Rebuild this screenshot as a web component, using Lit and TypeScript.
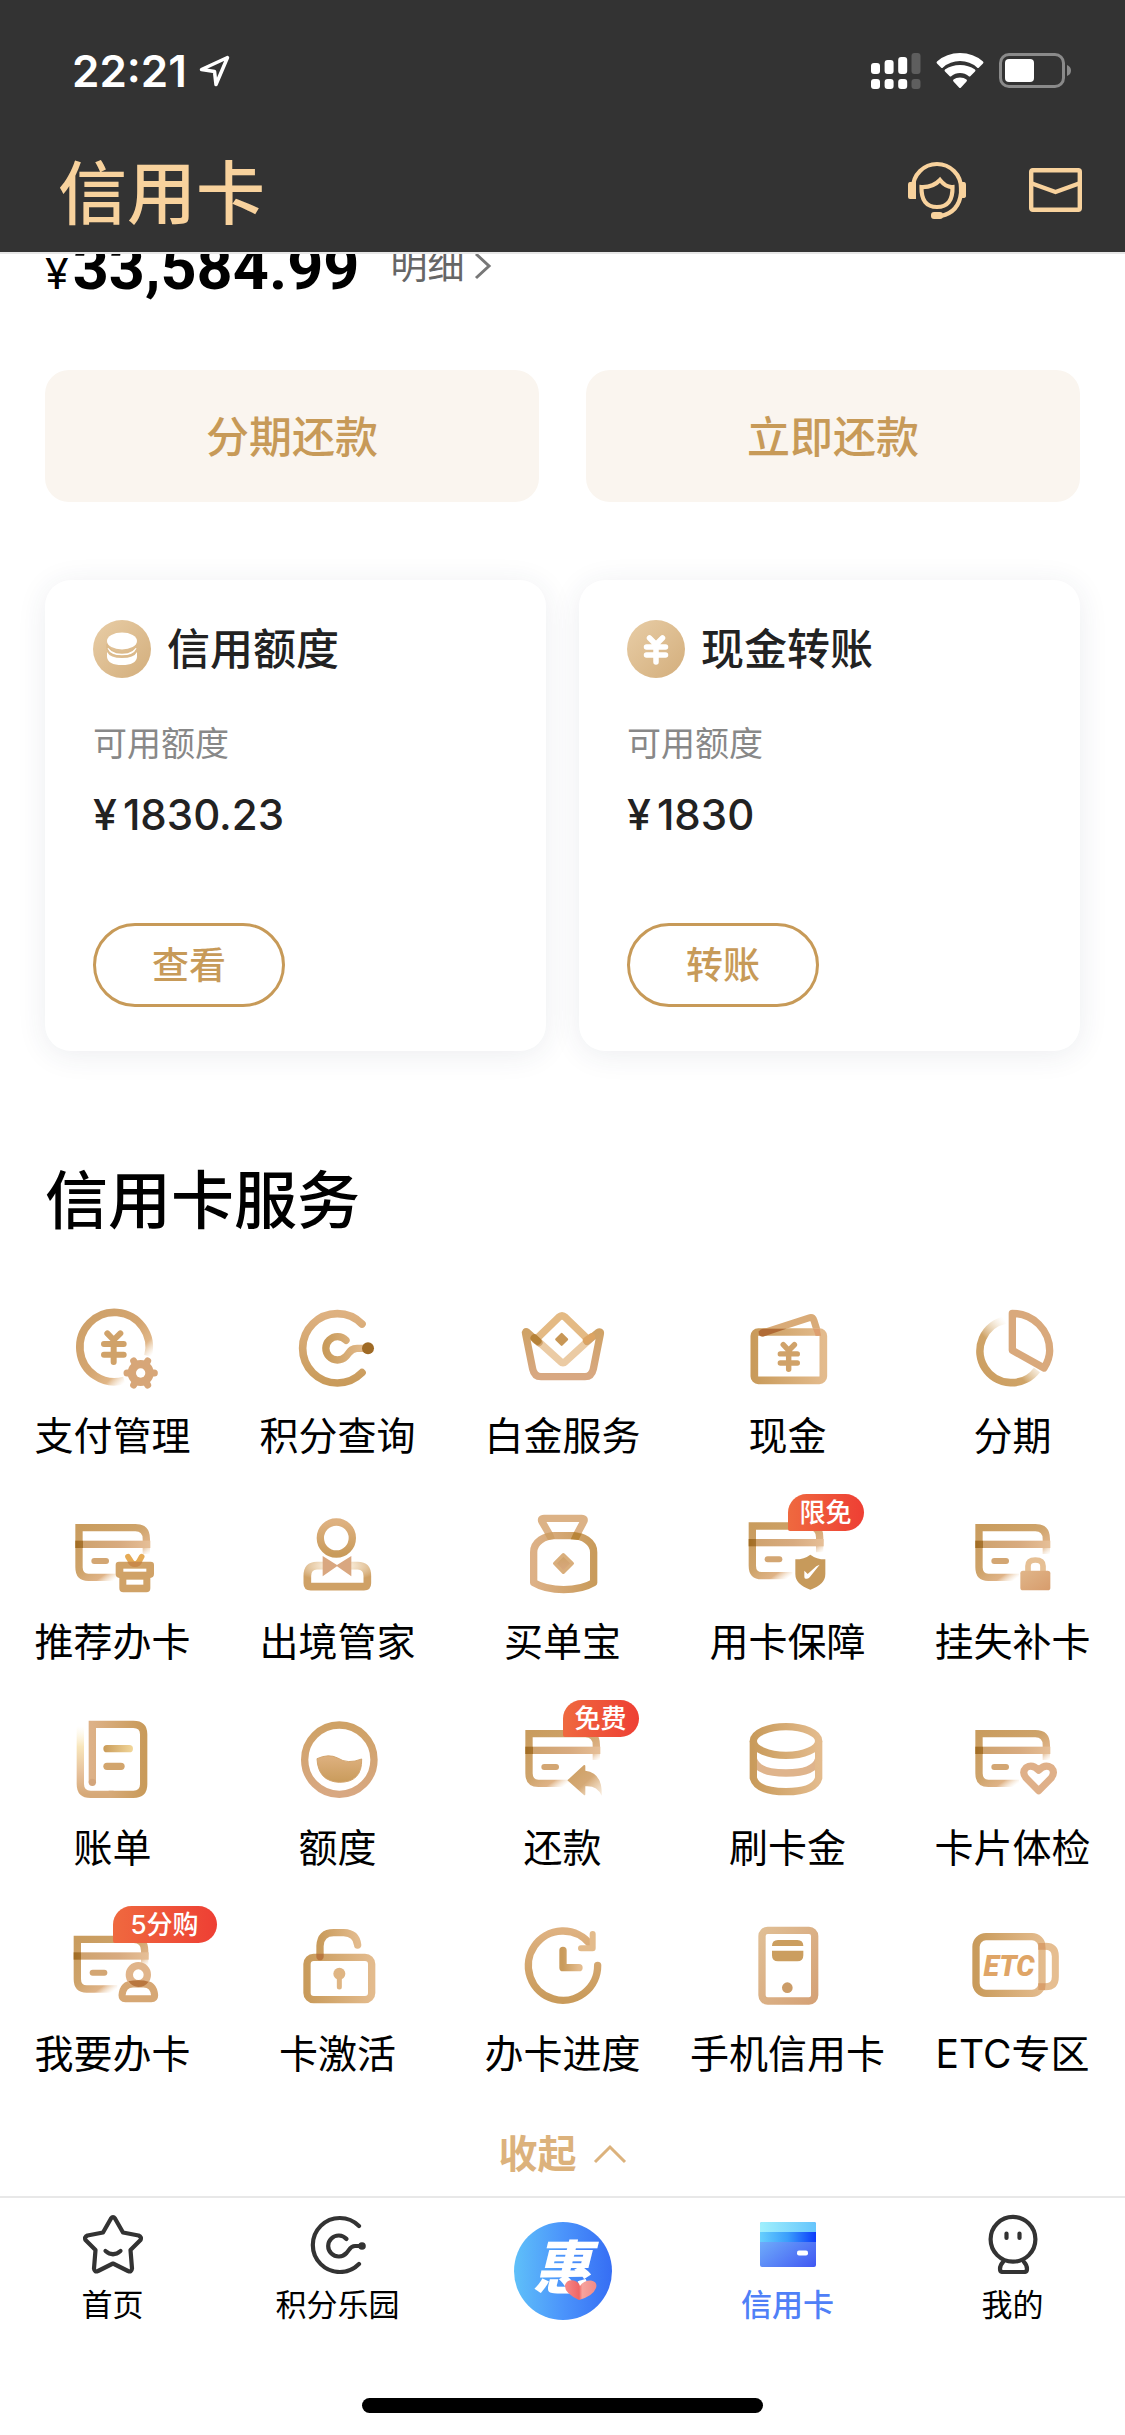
import { LitElement, html, svg, css, nothing, type SVGTemplateResult } from "lit";
import { customElement, property } from "lit/decorators.js";

interface Service {
  label: string;
  box: string;
  art: SVGTemplateResult;
  badge?: string;
  wide?: boolean;
}

/* Shared bank-card outline: fades out where an emblem sits on its lower right corner. */
const card = (x: number, y: number) => svg`
  <g transform="translate(${x} ${y})">
    <path d="M356 860H264Q236 860 236 830V711H405Q438 711 438 745V790" fill="none" stroke="url(#fade)" stroke-width="22"/>
    <rect x="225" y="750" width="225" height="22" fill="url(#band)"/>
    <rect x="273" y="802" width="53" height="18" rx="9" fill="#d3a673"/>
  </g>`;

const yen = (x: number, y: number, s: number, w: number) => svg`
  <path transform="translate(${x} ${y}) scale(${s})" d="M-19 -44L0 -24L20 -44M-29 -12H30M-29 20H30M0 -24V42"
    fill="none" stroke="#d0a269" stroke-width="${w}" stroke-linecap="round" stroke-linejoin="round"/>`;

const services: Service[] = [
  {
    label: "支付管理",
    box: "188 22 300 300",
    art: svg`
      <path d="M443 196A104 104 0 1 0 372 269" fill="none" stroke="url(#fadeRing)" stroke-width="23"/>
      ${yen(340, 172, 1, 18)}
      <circle cx="421" cy="247" r="39" fill="#d7a678"/>
      <path d="M380 247H462M400 211L442 283M442 211L400 283" stroke="#d7a678" stroke-width="21" stroke-linecap="round"/>
      <circle cx="421" cy="247" r="14" fill="#fff"/>`,
  },
  {
    label: "积分查询",
    box: "863 22 300 300",
    art: svg`
      <path d="M1085 100A104 104 0 1 0 1085 246" fill="none" stroke="url(#down)" stroke-width="23" stroke-linecap="round"/>
      <path d="M1037 149A35 35 0 1 0 1036 198C1048 186 1050 173 1070 173H1092" fill="none" stroke="url(#across)" stroke-width="22" stroke-linecap="round"/>
      <circle cx="1103" cy="173" r="18" fill="#9f6a25"/>`,
  },
  {
    label: "白金服务",
    box: "248 22 300 300",
    art: svg`
      <path d="M315 148L385 80Q395 71 405 80L475 148" fill="none" stroke="#e4ba84" stroke-width="22" stroke-linecap="round"/>
      <path d="M310 140L390 212Q398 220 406 212L485 140" fill="none" stroke="#ebcba4" stroke-width="22"/>
      <path d="M326 156L291 125Q284 120 286 130L307 235Q312 258 332 258H464Q484 258 489 235L510 130Q512 120 502 126L470 152"
        fill="none" stroke="url(#downRose)" stroke-width="22" stroke-linecap="round"/>
      <path d="M312 142L322 151" stroke="#b68238" stroke-width="23" stroke-linecap="round"/>
      <path d="M468 149L484 138" stroke="#dca463" stroke-width="21" stroke-linecap="round"/>
      <path d="M394 130L410 146L394 162L378 146Z" fill="#c89756" stroke="#c89756" stroke-width="7" stroke-linejoin="round"/>`,
  },
  {
    label: "现金",
    box: "143 22 300 300",
    art: svg`
      <path d="M216 127L355 82Q367 78 371 90L382 125" fill="none" stroke="#d9ab78" stroke-width="21" stroke-linecap="round"/>
      <rect x="192" y="124" width="207" height="145" rx="12" fill="none" stroke="url(#across)" stroke-width="23"/>
      <path d="M206 122Q210 115 218 114H288L222 137Q206 140 205 126Z" fill="#b16b36"/>
      <path d="M368 114H388L392 135H376Z" fill="#dd9f70"/>
      ${yen(295, 200, 0.86, 19)}`,
  },
  {
    label: "分期",
    box: "818 22 300 300",
    art: svg`
      <path d="M945 88A95 95 0 1 0 1040 238" fill="none" stroke="url(#fadeUp)" stroke-width="23"/>
      <path d="M966 68V179L1061 232Q1078 205 1078 180A112 112 0 0 0 966 68Z" fill="#fff" stroke="#d9a97c" stroke-width="22" stroke-linejoin="round"/>`,
  },
  {
    label: "推荐办卡",
    box: "188 640 300 300",
    art: svg`
      ${card(0, 0)}
      <path d="M383 798L392 812Q404 828 416 812L424 798" fill="none" stroke="#e5aa55" stroke-width="17" stroke-linecap="round"/>
      <path d="M356 813H451Q461 813 461 823V849Q461 860 450 862V893Q450 905 438 905H369Q357 905 357 893V862Q346 860 346 849V823Q346 813 356 813Z" fill="#d0a267"/>
      <path d="M381 813H426Q420 829 404 829Q388 829 381 813Z" fill="#c98a4b"/>
      <rect x="369" y="834" width="69" height="9" fill="#fff"/>
      <rect x="378" y="867" width="51" height="15" fill="#fff"/>`,
  },
  {
    label: "出境管家",
    box: "863 640 300 300",
    art: svg`
      <circle cx="1008" cy="742" r="48" fill="none" stroke="url(#down)" stroke-width="22"/>
      <path d="M972 825H950Q921 825 921 856V878Q921 888 931 888H1091Q1101 888 1101 878V856Q1101 825 1072 825H1048"
        fill="none" stroke="url(#glow)" stroke-width="23"/>
      <path d="M967 796L1010 823L1053 796V857L1010 827L967 857Z" fill="#d9a780"/>`,
  },
  {
    label: "买单宝",
    box: "248 640 300 300",
    art: svg`
      <path d="M360 736L335 693Q330 683 341 683H454Q465 683 460 693L437 736" fill="none" stroke="#dcb286" stroke-width="22"/>
      <path d="M310 785C310 752 345 735 372 735H428C455 735 490 752 490 785V876Q455 897 400 897Q345 897 310 876Z"
        fill="none" stroke="url(#acrossRev)" stroke-width="22" stroke-linejoin="round"/>
      <path d="M431 724L454 729L445 748L421 746Z" fill="#b98539"/>
      <path d="M343 729L366 724L374 744L353 748Z" fill="#cfa067"/>
      <path d="M399 792L426 818L399 845L373 818Z" fill="url(#downRose)" stroke="#d9ae7c" stroke-width="10" stroke-linejoin="round"/>`,
  },
  {
    label: "用卡保障",
    box: "143 640 300 300",
    badge: "限免",
    art: svg`
      ${card(-50, -5)}
      <path d="M360 792Q378 806 405 806V850Q405 882 360 897Q315 882 315 850V806Q342 806 360 792Z" fill="#c79a5b"/>
      <path d="M342 840L352 850L368 836Q378 824 388 822L358 860Q355 864 350 864H346Q342 864 342 858Z" fill="#fff"/>`,
  },
  {
    label: "挂失补卡",
    box: "818 640 300 300",
    art: svg`
      ${card(630, 0)}
      <path d="M1013 842V826Q1013 808 1035 808Q1058 808 1058 826V842" fill="#fff" stroke="#e6c095" stroke-width="17"/>
      <rect x="990" y="840" width="90" height="59" rx="8" fill="url(#tan)"/>`,
  },
  {
    label: "账单",
    box: "188 58 300 300",
    art: svg`
      <path d="M240 106V280Q240 311 271 311H340" fill="none" stroke="url(#rise)" stroke-width="22"/>
      <path d="M276 275V101H399Q430 101 430 131V281Q430 311 399 311H325" fill="none" stroke="url(#acrossRev)" stroke-width="22"/>
      <circle cx="276" cy="275" r="11" fill="#d3a57c"/>
      <rect x="309" y="163" width="89" height="22" rx="11" fill="url(#gleam)"/>
      <rect x="309" y="216" width="64" height="22" rx="11" fill="#d2a56d"/>`,
  },
  {
    label: "额度",
    box: "863 58 300 300",
    art: svg`
      <circle cx="1017" cy="207" r="104" fill="none" stroke="url(#downRose)" stroke-width="22"/>
      <path d="M950 204Q985 188 1012 202Q1042 222 1084 205Q1086 275 1017 275Q953 272 950 204Z"
        fill="url(#down)" stroke="#d3a56e" stroke-width="3" stroke-linejoin="round"/>`,
  },
  {
    label: "还款",
    box: "248 58 300 300",
    badge: "免费",
    art: svg`
      ${card(60, -582)}
      <path d="M411 269L460 224Q465 221 465 227V240Q517 246 514 315Q500 284 465 287V310Q465 316 460 312Z" fill="url(#arrow)"/>`,
  },
  {
    label: "刷卡金",
    box: "143 58 300 300",
    art: svg`
      <path d="M189 205Q200 247 287 247Q374 247 385 205" fill="none" stroke="#dfb48c" stroke-width="22"/>
      <path d="M189 151V262Q200 303 287 303Q374 303 385 262V151" fill="none" stroke="url(#across)" stroke-width="22"/>
      <ellipse cx="287" cy="151" rx="98" ry="43" fill="#fff" stroke="url(#across)" stroke-width="22"/>`,
  },
  {
    label: "卡片体检",
    box: "818 58 300 300",
    art: svg`
      ${card(630, -582)}
      <path d="M1045 300L1008 263Q993 245 1007 231Q1026 219 1045 239Q1064 219 1083 231Q1096 245 1082 263Z"
        fill="#fff" stroke="#fff" stroke-width="32" stroke-linejoin="round"/>
      <path d="M1045 300L1008 263Q993 245 1007 231Q1026 219 1045 239Q1064 219 1083 231Q1096 245 1082 263Z"
        fill="#fff" stroke="#dfb089" stroke-width="21" stroke-linejoin="round"/>`,
  },
  {
    label: "我要办卡",
    box: "188 676 300 300",
    badge: "5分购",
    wide: true,
    art: svg`
      ${card(-5, 35)}
      <path d="M375 924H453Q463 924 463 914Q460 880 430 880H398Q368 880 365 914Q365 924 375 924Z"
        fill="#fff" stroke="#d6a774" stroke-width="21"/>
      <circle cx="414" cy="852" r="27" fill="#fff" stroke="#e0b48a" stroke-width="22"/>
      <path d="M384 872Q398 869 414 869Q432 869 445 873Q434 889 414 889Q396 889 384 872Z" fill="#b9773f"/>`,
  },
  {
    label: "卡激活",
    box: "863 676 300 300",
    art: svg`
      <path d="M959 797V766Q961 726 1000 726H1030Q1068 727 1072 763" fill="none" stroke="url(#across)" stroke-width="22" stroke-linecap="round"/>
      <rect x="920" y="800" width="194" height="127" rx="20" fill="none" stroke="url(#across)" stroke-width="22"/>
      <path d="M948 789H970V799Q968 809 959 809Q950 809 948 799Z" fill="#b9773f"/>
      <circle cx="1017" cy="849" r="18" fill="#dfb583"/>
      <path d="M1017 850V889" stroke="#dfb583" stroke-width="15" stroke-linecap="round"/>`,
  },
  {
    label: "办卡进度",
    box: "248 676 300 300",
    art: svg`
      <path d="M502 824A104 104 0 1 1 480 761" fill="none" stroke="url(#down)" stroke-width="22" stroke-linecap="round"/>
      <path d="M487 730V773H452" fill="none" stroke="#e3bb8b" stroke-width="18" stroke-linecap="round" stroke-linejoin="round"/>
      <path d="M398 779V831H446" fill="none" stroke="url(#across)" stroke-width="22" stroke-linecap="round" stroke-linejoin="round"/>`,
  },
  {
    label: "手机信用卡",
    box: "143 676 300 300",
    art: svg`
      <rect x="215" y="719" width="158" height="212" rx="17" fill="none" stroke="url(#rose)" stroke-width="22"/>
      <path d="M245 766Q245 748 263 748H321Q339 748 339 766ZM245 780H339V794Q339 812 321 812H263Q245 812 245 794Z" fill="#cb9e5f"/>
      <circle cx="291" cy="891" r="16" fill="#cb9c68"/>`,
  },
  {
    label: "ETC专区",
    box: "818 676 300 300",
    art: svg`
      <path d="M1045 767H1066Q1095 767 1095 797V858Q1095 888 1066 888H1045" fill="none" stroke="#e6be91" stroke-width="21"/>
      <rect x="857" y="738" width="198" height="170" rx="30" fill="none" stroke="url(#across)" stroke-width="22"/>
      <path d="M1044 757H1064L1066 777H1044ZM1044 878H1066L1064 898H1044Z" fill="#d99f6b"/>
      <text class="etc" x="956" y="857" text-anchor="middle">ETC</text>`,
  },
];

@customElement("service-tile")
class ServiceTile extends LitElement {
  @property({ attribute: false }) item!: Service;

  static styles = css`
    :host { display: block; }
    .tile { position: relative; display: flex; flex-direction: column; align-items: center; gap: 18px; color: #000; text-decoration: none; }
    .icon { width: 100px; height: 100px; overflow: visible; }
    .label { font-size: 39px; line-height: 40px; white-space: nowrap; }
    .badge {
      position: absolute; left: 50%; top: -10px; padding: 0 12px; border-radius: 19px 19px 19px 2px;
      background: linear-gradient(90deg, #ef693f, #ee3f34); color: #fff; font-size: 26px; line-height: 37px; font-weight: 500; white-space: nowrap;
    }
    .wide { padding: 0 18px; }
    .etc { font: italic 900 86px Roboto, "Liberation Sans", sans-serif; fill: #dfa567; }
  `;

  render() {
    const s = this.item;
    return html`<a class="tile" href="#service">
      <svg class="icon" viewBox=${s.box} aria-hidden="true">
        <defs>
          <linearGradient id="fade" x1="0" y1="0" x2="1" y2="1"><stop offset="0" stop-color="#c99c5e"/><stop offset=".45" stop-color="#cea36a"/><stop offset=".66" stop-color="#dfb387"/><stop offset=".79" stop-color="#f0d6b8" stop-opacity="0"/></linearGradient>
          <linearGradient id="fadeRing" x1="0" y1="0" x2="1" y2="1"><stop offset="0" stop-color="#cda068"/><stop offset=".5" stop-color="#d4a570"/><stop offset=".7" stop-color="#e0b687"/><stop offset=".83" stop-color="#f0d6b8" stop-opacity="0"/></linearGradient>
          <linearGradient id="fadeUp" x1="0" y1="1" x2="1" y2="0"><stop offset="0" stop-color="#cb9d60"/><stop offset=".4" stop-color="#cfa468"/><stop offset=".72" stop-color="#efd9b8" stop-opacity="0"/></linearGradient>
          <linearGradient id="band" x1="0" y1="0" x2="1" y2="0"><stop offset="0" stop-color="#a16c22"/><stop offset=".1" stop-color="#a8742f"/><stop offset=".1" stop-color="#cfa36f"/><stop offset=".6" stop-color="#d8ab80"/><stop offset="1" stop-color="#e6bf97"/></linearGradient>
          <linearGradient id="down" x1="0" y1="0" x2="0" y2="1"><stop offset="0" stop-color="#deb180"/><stop offset="1" stop-color="#c99b5b"/></linearGradient>
          <linearGradient id="downRose" x1="0" y1="0" x2="0" y2="1"><stop offset="0" stop-color="#cfa266"/><stop offset="1" stop-color="#d8a882"/></linearGradient>
          <linearGradient id="across" x1="0" y1="0" x2="1" y2="0"><stop offset="0" stop-color="#c99b5b"/><stop offset="1" stop-color="#e3bb8d"/></linearGradient>
          <linearGradient id="acrossRev" x1="0" y1="0" x2="1" y2="0"><stop offset="0" stop-color="#ddb187"/><stop offset="1" stop-color="#c99b5b"/></linearGradient>
          <linearGradient id="rose" x1="0" y1="0" x2="1" y2="1"><stop offset="0" stop-color="#e0be94"/><stop offset="1" stop-color="#d5a277"/></linearGradient>
          <linearGradient id="rise" x1="0" y1="0" x2="0" y2="1"><stop offset="0" stop-color="#fdf3d6" stop-opacity="0"/><stop offset=".3" stop-color="#f8e6bb"/><stop offset=".7" stop-color="#e6c09a"/><stop offset="1" stop-color="#d6a978"/></linearGradient>
          <linearGradient id="gleam" x1="0" y1="0" x2="1" y2="0"><stop offset="0" stop-color="#c99b58"/><stop offset="1" stop-color="#f2d79b"/></linearGradient>
          <linearGradient id="tan" x1="0" y1="0" x2="1" y2="1"><stop offset="0" stop-color="#e0b68a"/><stop offset="1" stop-color="#d79c6c"/></linearGradient>
          <linearGradient id="arrow" x1="0" y1="0" x2="1" y2="1"><stop offset="0" stop-color="#cb9d5e"/><stop offset=".55" stop-color="#d5a976"/><stop offset="1" stop-color="#eed1ad" stop-opacity=".4"/></linearGradient>
          <radialGradient id="glow" cx=".5" cy="0" r=".75"><stop offset=".3" stop-color="#f8ead6"/><stop offset="1" stop-color="#cfa166"/></radialGradient>
        </defs>
        ${s.art}
      </svg>
      <span class="label">${s.label}</span>
      ${s.badge ? html`<span class="badge ${s.wide ? "wide" : ""}">${s.badge}</span>` : nothing}
    </a>`;
  }
}

@customElement("app-root")
class AppRoot extends LitElement {
  static styles = css`
    :host {
      display: flex; flex-direction: column; min-height: 100vh; background: #fff; color: #000;
      font-family: Inter, "Noto Sans CJK SC", sans-serif;
    }
    * { box-sizing: border-box; }
    h1, h2, h3, p, ul { margin: 0; padding: 0; }
    h1, h2, h3 { font-weight: 500; }
    ul { list-style: none; }
    button { font: inherit; cursor: pointer; }
    a { text-decoration: none; }
    svg { display: block; flex: none; }

    .header { position: relative; z-index: 1; background: #333; border-bottom: 2px solid #e6e6e6; padding-bottom: 14px; }
    .status { display: flex; align-items: center; justify-content: space-between; height: 142px; padding: 0 53px 0 72px; color: #fff; }
    .clock { display: flex; align-items: center; gap: 12px; font-size: 44px; line-height: 48px; font-weight: 600; }
    .signals { display: flex; align-items: center; gap: 15px; }
    .titlebar { display: flex; align-items: center; justify-content: space-between; height: 96px; padding: 0 43px 0 58px; color: #f8d29d; }
    .title { padding-top: 8px; font-size: 69px; line-height: 80px; }
    .tools { display: flex; align-items: center; gap: 62px; }
    .tool { padding: 0; border: 0; background: none; color: inherit; }

    .bill { display: flex; align-items: baseline; margin-top: -26px; padding: 0 45px; height: 76px; line-height: 80px; }
    .yen { font-size: 43px; }
    .total { margin-left: 4px; font-family: Roboto, "Liberation Sans", sans-serif; font-size: 63px; font-weight: 700; }
    .detail { display: flex; align-items: center; align-self: flex-start; gap: 10px; margin-left: 31px; color: #666; font-size: 37px; line-height: 76px; }
    .pay { display: grid; grid-template-columns: 1fr 1fr; gap: 47px; margin-top: 66px; padding: 0 45px; }
    .paybtn { height: 132px; padding: 0 0 4px; border: 0; border-radius: 24px; background: #faf5ef; color: #c79a58; font-size: 43px; font-weight: 500; }

    .cards { display: grid; grid-template-columns: 1fr 1fr; gap: 33px; margin-top: 78px; padding: 0 45px; }
    .card { display: flex; flex-direction: column; align-items: flex-start; padding: 40px 48px 44px; border-radius: 26px; background: #fff; box-shadow: 0 4px 30px rgba(40, 50, 90, 0.09); }
    .cardhead { display: flex; align-items: center; gap: 16px; color: #222; line-height: 58px; }
    .cardhead h3 { font-size: 43px; }
    .hint { margin-top: 46px; color: #888; font-size: 34px; line-height: 40px; }
    .sum { display: flex; align-items: baseline; gap: 6px; margin-top: 24px; color: #222; font-size: 42px; line-height: 52px; font-weight: 500; }
    .pill { width: 192px; height: 84px; margin-top: 82px; padding: 0 0 4px; border: 3px solid #c79a58; border-radius: 42px; background: #fff; color: #c79a58; font-size: 37px; font-weight: 500; }

    .heading { margin-top: 117px; padding: 0 45px; font-size: 63px; line-height: 64px; }
    .grid { display: grid; grid-template-columns: repeat(5, 1fr); row-gap: 48px; margin-top: 66px; }
    .fold { display: flex; align-items: center; align-self: center; gap: 16px; margin: 60px 0 22px; padding: 0; border: 0; background: none; color: #dcb27c; font-size: 39px; line-height: 40px; font-weight: 600; }

    .main { display: flex; flex-direction: column; }
    .nav { display: grid; grid-template-columns: repeat(5, 1fr); border-top: 2px solid #e8e8e8; padding-top: 16px; }
    .tab { display: flex; flex-direction: column; align-items: center; gap: 15px; color: #000; font-size: 31px; line-height: 32px; }
    .active { color: #4f80f7; font-weight: 500; }
    .brand { padding-top: 8px; }
    .logo { overflow: visible; }
    .mark { font: italic 900 58px "Noto Sans CJK SC", sans-serif; fill: #fff; }
    .homebar { width: 36%; max-width: 401px; height: 15px; margin: 77px auto 23px; border-radius: 8px; background: #000; }
  `;

  private summary(icon: SVGTemplateResult, name: string, value: string, action: string) {
    return html`<article class="card">
      <div class="cardhead">
        <svg width="58" height="58" viewBox="0 0 58 58" aria-hidden="true">
          <defs><linearGradient id="coin" x1="0" y1="0" x2="1" y2="1"><stop offset="0" stop-color="#e8cda6"/><stop offset="1" stop-color="#d3ae7c"/></linearGradient></defs>
          <circle cx="29" cy="29" r="29" fill="url(#coin)"/>${icon}
        </svg>
        <h3>${name}</h3>
      </div>
      <p class="hint">可用额度</p>
      <p class="sum"><span class="yen">¥</span><span>${value}</span></p>
      <button class="pill">${action}</button>
    </article>`;
  }

  render() {
    return html`
      <header class="header">
        <div class="status">
          <div class="clock"><span>22:21</span>
            <svg width="31" height="32" viewBox="0 0 31 32" aria-hidden="true"><path d="M28.500 2.500L2.500 14.500L15.500 16.500L17 29.500Z" fill="none" stroke="#fff" stroke-width="3.500" stroke-linejoin="round"/></svg>
          </div>
          <div class="signals">
            <svg width="50" height="36" viewBox="0 0 50 36" aria-hidden="true" fill="#fff">
              <rect x="0" y="10" width="9" height="11" rx="3"/><rect x="13.600" y="7" width="9" height="14" rx="3"/><rect x="27.200" y="4" width="9" height="17" rx="3"/>
              <rect x="0" y="26" width="9" height="10" rx="3"/><rect x="13.600" y="26" width="9" height="10" rx="3"/><rect x="27.200" y="26" width="9" height="10" rx="3"/>
              <g fill="#5e5e5e"><rect x="40.500" y="0" width="9" height="21" rx="3"/><rect x="40.500" y="26" width="9" height="10" rx="3"/></g>
            </svg>
            <svg width="48" height="36" viewBox="0 0 48 36" aria-hidden="true" fill="#fff">
              <path d="M1 10.500Q0 9.500 1 8.500Q10.500 0 24 0T47 8.500Q48 9.500 47 10.500L43 14.500Q42 15.500 41 14.500Q34 8 24 8T7 14.500Q6 15.500 5 14.500Z"/>
              <path d="M9 18.500Q8 17.500 9 16.500Q15.500 12 24 12T39 16.500Q40 17.500 39 18.500L34.500 23Q33.500 24 32.500 23Q29 20 24 20T15.500 23Q14.500 24 13.500 23Z"/>
              <path d="M17.500 28.500Q16.500 27.500 17.500 26.500Q20 24.500 24 24.500T30.500 26.500Q31.500 27.500 30.500 28.500L25 34.500Q24 35.500 23 34.500Z"/>
            </svg>
            <svg width="73" height="36" viewBox="0 0 73 36" aria-hidden="true">
              <rect x="1.500" y="1.500" width="63" height="32" rx="8.500" fill="none" stroke="#8a8a8a" stroke-width="3"/>
              <rect x="6" y="6" width="29" height="23" rx="4" fill="#fff"/>
              <path d="M68 12Q72 13.500 72 17.500T68 23Z" fill="#8a8a8a"/>
            </svg>
          </div>
        </div>
        <div class="titlebar">
          <h1 class="title">信用卡</h1>
          <div class="tools">
            <button class="tool" aria-label="客服">
              <svg width="60" height="60" viewBox="0 0 60 60" fill="none" stroke="currentColor" stroke-width="4.200">
                <path d="M6 30V28A24 24 0 0 1 54 28V33Q52 52 34 56"/>
                <path d="M14.500 27Q26 27.500 33 20Q39 27.500 45.500 27Q46 47 30 47Q14 47 14.500 27Z"/>
                <path d="M3 22H9V39H3Q1 39 1 37V25Q1 22 3 22ZM52 22H57Q59 22 59 25V36Q59 38 56 38H52Z" fill="currentColor" stroke="none"/>
                <rect x="24" y="52" width="12" height="7" rx="3" fill="currentColor" stroke="none"/>
              </svg>
            </button>
            <button class="tool" aria-label="消息">
              <svg width="53" height="44" viewBox="0 0 53 44" fill="none" stroke="currentColor" stroke-width="4.400">
                <rect x="2.200" y="2.200" width="48.600" height="39.600" rx="1.500"/><path d="M3 15.500L26.500 24L50 15.500"/>
              </svg>
            </button>
          </div>
        </div>
      </header>

      <main class="main">
        <section class="bill">
          <span class="yen">¥</span><span class="total">33,584.99</span>
          <a class="detail" href="#detail">明细
            <svg width="18" height="28" viewBox="0 0 18 28" aria-hidden="true"><path d="M2 2L15 14L2 26" fill="none" stroke="#777" stroke-width="3"/></svg>
          </a>
        </section>
        <div class="pay">
          <button class="paybtn">分期还款</button>
          <button class="paybtn">立即还款</button>
        </div>
        <section class="cards">
          ${this.summary(
            svg`<path d="M14 32Q17 38 29 38T44 32V37Q43 45 29 45T14 37Z" fill="#fff"/>
              <path d="M14 24Q17 33 29 33T44 24V29Q41 36 29 36T14 29Z" fill="#fff" stroke="#dcba8b" stroke-width="1.500"/>
              <ellipse cx="29" cy="21" rx="15" ry="8.500" fill="#fff"/>`,
            "信用额度", "1830.23", "查看")}
          ${this.summary(
            svg`<path d="M22.500 18L29 24.500L35.500 18M19.500 27H38.500M19.500 35H38.500M29 25V42" fill="none" stroke="#fff" stroke-width="5.500" stroke-linecap="round"/>`,
            "现金转账", "1830", "转账")}
        </section>

        <h2 class="heading">信用卡服务</h2>
        <ul class="grid">
          ${services.map((s) => html`<li><service-tile .item=${s}></service-tile></li>`)}
        </ul>
        <button class="fold">收起
          <svg width="34" height="20" viewBox="0 0 34 20" aria-hidden="true"><path d="M2 18L17 3L32 18" fill="none" stroke="currentColor" stroke-width="3"/></svg>
        </button>
      </main>

      <nav class="nav">
        <a class="tab" href="#home">
          <svg width="60" height="60" viewBox="0 0 60 60" fill="none" stroke="#333" stroke-width="4.200" stroke-linejoin="round" stroke-linecap="round" aria-hidden="true">
            <path d="M28 4.500Q30 1.500 32 4.500L40 18.500L55.500 21.500Q59 23 57.500 26L47.500 36L49 54.500Q48.500 58.500 45 57L30 49.500L15 57Q11.500 58.500 11 54.500L12.500 36L2.500 26Q1 23 4.500 21.500L20 18.500Z"/>
            <path d="M22.500 37Q30 43.500 37.500 37"/>
          </svg>首页</a>
        <a class="tab" href="#points">
          <svg width="60" height="60" viewBox="0 0 60 60" fill="none" stroke="#333" stroke-width="4.200" stroke-linecap="round" aria-hidden="true">
            <path d="M51 12A27 27 0 1 0 51 50"/>
            <path d="M38.500 25A10.500 10.500 0 1 0 38.500 39C41.500 36 42 32 47 32H52"/>
            <circle cx="54" cy="32" r="3.800" fill="#333" stroke="none"/>
          </svg>积分乐园</a>
        <a class="tab brand" href="#offers" aria-label="惠">
          <svg class="logo" width="98" height="98" viewBox="0 0 98 98" aria-hidden="true">
            <defs>
              <linearGradient id="disc" x1="0" y1="0" x2="1" y2="0"><stop offset="0" stop-color="#5fc0f9"/><stop offset=".5" stop-color="#4b94fb"/><stop offset="1" stop-color="#366ef4"/></linearGradient>
              <linearGradient id="heart" x1="0" y1="0" x2="1" y2="0"><stop offset="0" stop-color="#f58a8a"/><stop offset=".45" stop-color="#ef6566"/><stop offset=".55" stop-color="#f6a39d"/><stop offset="1" stop-color="#f08a88"/></linearGradient>
            </defs>
            <circle cx="49" cy="49" r="49" fill="url(#disc)"/>
            <text class="mark" x="48" y="67" text-anchor="middle">惠</text>
            <path d="M65 78Q50 71 51 63Q53 57 60 58.500Q65 60 66 64Q70 58 77 58.500Q84 60 82 66Q79 74 65 78Z" fill="url(#heart)"/>
          </svg></a>
        <a class="tab active" href="#card" aria-current="page">
          <svg width="60" height="60" viewBox="0 0 60 60" aria-hidden="true">
            <defs>
              <linearGradient id="n1" x1="0" y1="0" x2="1" y2="0"><stop offset="0" stop-color="#a0f0fd"/><stop offset="1" stop-color="#66c5fc"/></linearGradient>
              <linearGradient id="n2" x1="0" y1="0" x2="1" y2="0"><stop offset="0" stop-color="#66cffd"/><stop offset=".5" stop-color="#3a9dfb"/><stop offset="1" stop-color="#0b3bfb"/></linearGradient>
              <linearGradient id="n3" x1="0" y1="0" x2="1" y2="1"><stop offset="0" stop-color="#7cc4fc"/><stop offset="1" stop-color="#4057f3"/></linearGradient>
            </defs>
            <rect x="2" y="8" width="56" height="45" rx="2" fill="url(#n3)"/>
            <path d="M2 18V10Q2 8 4 8H56Q58 8 58 10V18Z" fill="url(#n1)"/>
            <rect x="2" y="18" width="56" height="10" fill="url(#n2)"/>
            <rect x="39" y="36.500" width="11" height="5" rx="2" fill="#fff"/>
          </svg>信用卡</a>
        <a class="tab" href="#me">
          <svg width="60" height="60" viewBox="0 0 60 60" fill="none" stroke="#333" stroke-width="4.200" stroke-linecap="round" stroke-linejoin="round" aria-hidden="true">
            <circle cx="30" cy="25.300" r="22.400"/><path d="M23.500 19.500V24M36.500 19.500V24"/>
            <path d="M20 48Q17 51 17 55Q17 58 20 58H41Q44 58 44 55Q44 51 41 48"/>
          </svg>我的</a>
      </nav>
      <div class="homebar"></div>
    `;
  }
}
